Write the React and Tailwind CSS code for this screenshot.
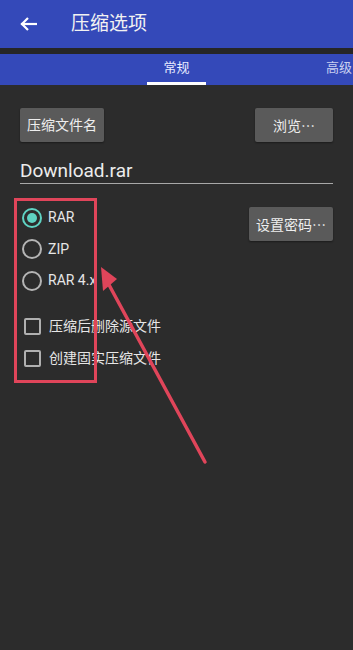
import React from "react";

const font = { fontFamily: "Roboto, 'Noto Sans CJK SC', sans-serif" };

function Radio({ checked, label }) {
  return (
    <div className="flex items-center h-[31.5px]">
      <div
        className={
          "w-[20px] h-[20px] rounded-full border-2 flex items-center justify-center " +
          (checked ? "border-[#5fd3c3]" : "border-[#b5b5b5]")
        }
      >
        {checked && <div className="w-[10px] h-[10px] rounded-full bg-[#5fd3c3]" />}
      </div>
      <span className="ml-[6px] text-[14px] text-[#e6e6e6]">{label}</span>
    </div>
  );
}

function Check({ label }) {
  return (
    <div className="flex items-center h-[32px]">
      <div className="ml-[2px] w-[17px] h-[17px] rounded-[2px] border-2 border-[#b0b0b0]" />
      <span className="ml-[8px] text-[14px] text-[#e6e6e6]">{label}</span>
    </div>
  );
}

const cjk = { fontFamily: "'Noto Sans CJK SC', sans-serif" };

export default function App() {
  return (
    <div className="relative w-[353px] h-[650px] overflow-hidden bg-[#2c2c2c]" style={font}>
      <div className="h-[48px] bg-[#3449b9] flex items-center px-[20px]">
        <svg width="17" height="16" viewBox="0 0 17 16" fill="none" stroke="#ffffff" strokeWidth="2.2" strokeLinecap="square">
          <path d="M2 8 H16" />
          <path d="M8 2 L2 8 L8 14" strokeLinecap="butt" />
        </svg>
        <span className="ml-[34px] text-[19px] text-[#f2f2f2]">压缩选项</span>
      </div>
      <div className="h-[6px] bg-[#262626]" />
      <div className="h-[31px] bg-[#3449b9] flex overflow-hidden">
        <div className="ml-[147px] w-[59px] shrink-0 flex flex-col">
          <div className="flex-1 flex items-center justify-center text-[13px] text-[#e8ecff]">常规</div>
          <div className="h-[3px] bg-white" />
        </div>
        <div className="ml-[120px] shrink-0 flex items-center pb-[3px] text-[13px] text-[#c9d0f0] whitespace-nowrap">高级</div>
      </div>

      <div className="px-[20px] pt-[23px]">
        <div className="flex justify-between">
          <div className="h-[34px] w-[84px] bg-[#5a5a5a] rounded-[2px] flex items-center justify-center text-[14px] text-[#eeeeee] shadow-[0_1px_2px_rgba(0,0,0,0.4)]">
            压缩文件名
          </div>
          <div className="h-[34px] w-[78px] bg-[#5a5a5a] rounded-[2px] flex items-center justify-center text-[14px] text-[#eeeeee] shadow-[0_1px_2px_rgba(0,0,0,0.4)]" style={cjk}>
            浏览⋯
          </div>
        </div>
        <div className="mt-[8px] h-[34px] flex items-end border-b border-[#a8a8a8]">
          <span className="text-[19px] leading-[24px] text-[#ececec]">Download.rar</span>
        </div>

        <div className="mt-[16px] flex justify-between">
          <div className="flex flex-col mt-[2px] pl-[2px]">
            <Radio checked label="RAR" />
            <Radio label="ZIP" />
            <Radio label="RAR 4.x" />
            <div className="h-[14px]" />
            <Check label="压缩后删除源文件" />
            <Check label="创建固实压缩文件" />
          </div>
          <div className="mt-[7px] h-[34px] w-[84px] bg-[#5a5a5a] rounded-[2px] flex items-center justify-center text-[14px] text-[#eeeeee] shadow-[0_1px_2px_rgba(0,0,0,0.4)]" style={cjk}>
            设置密码⋯
          </div>
        </div>
      </div>

      <div className="absolute left-[14px] top-[198px] w-[83px] h-[185px] border-[3px] border-[#e0455a]" />
      <svg className="absolute left-0 top-0" width="353" height="650" viewBox="0 0 353 650">
        <line x1="205" y1="462" x2="108" y2="283" stroke="#e0455a" strokeWidth="3.5" strokeLinecap="round" />
        <polygon points="101,267 117,279 103,291" fill="#e0455a" />
      </svg>
    </div>
  );
}
